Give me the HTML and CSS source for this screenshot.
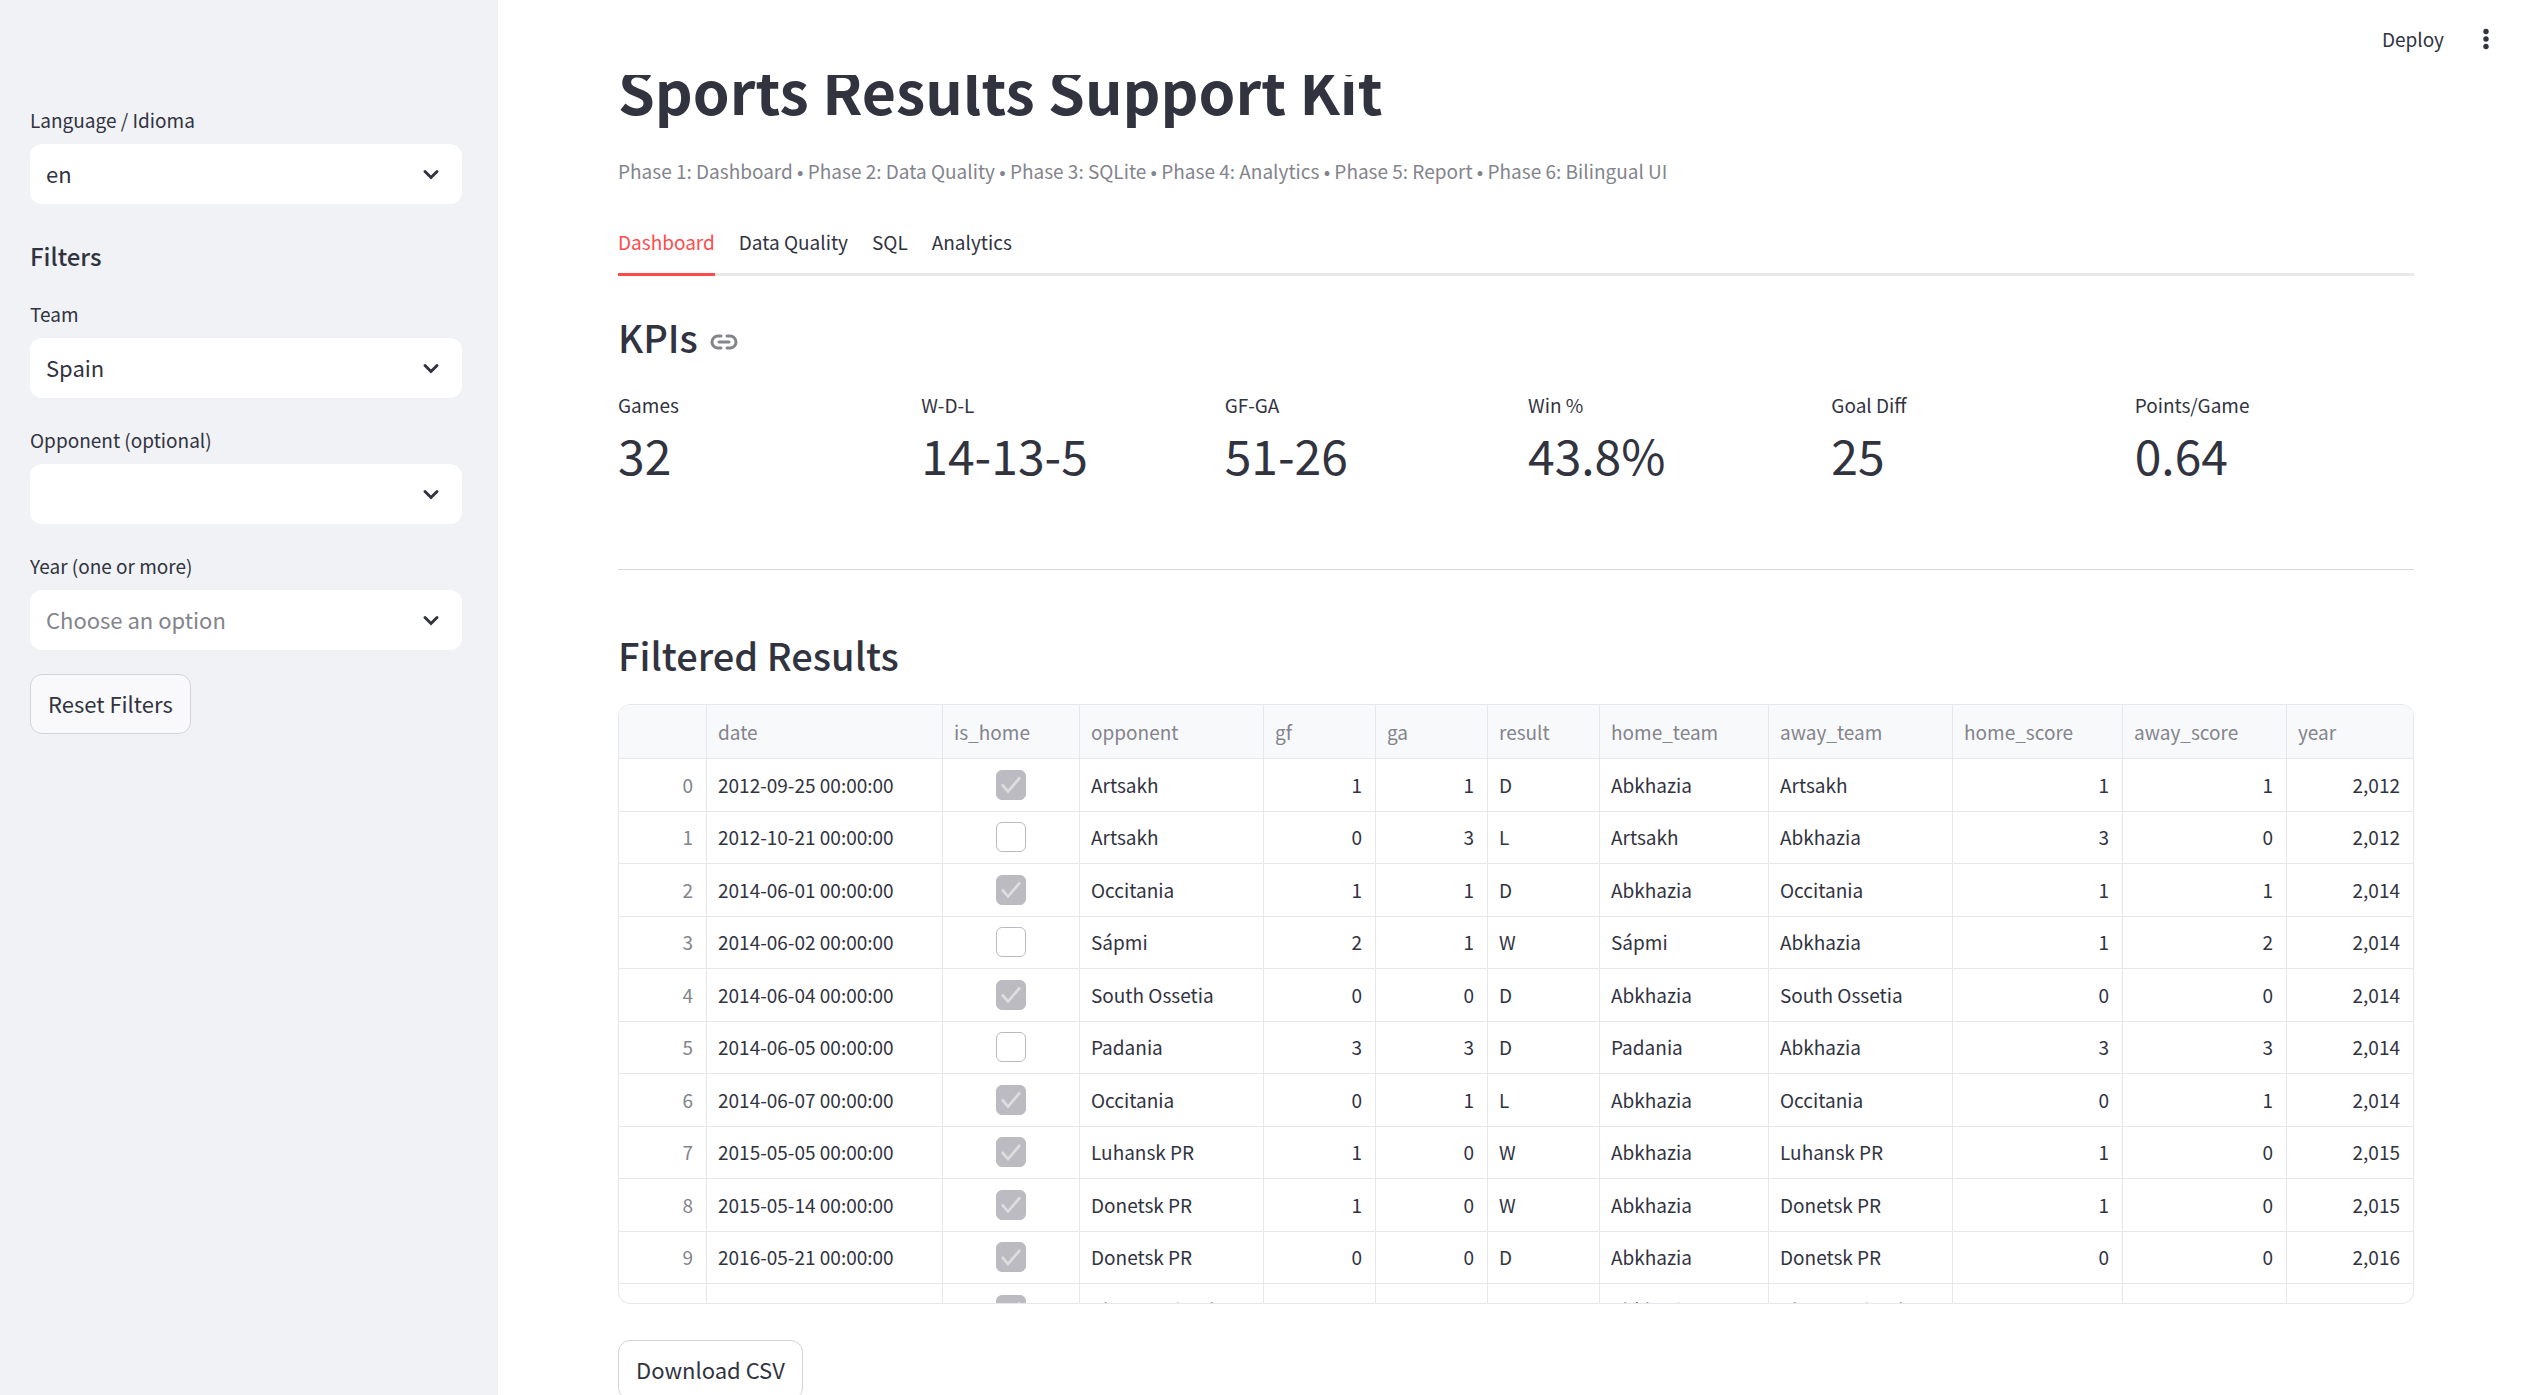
FILE: index.html
```html
<!DOCTYPE html>
<html lang="en">
<head>
<meta charset="utf-8">
<title>Sports Results Support Kit</title>
<link rel="stylesheet" href="styles.css">
</head>
<body>
<div class="app">
  <aside class="sidebar">
    <div class="field">
      <label for="lang">Language / Idioma</label>
      <div class="select">
        <select id="lang"><option>en</option><option>es</option></select>
        <svg class="chevron" viewBox="0 0 24 24" aria-hidden="true"><path d="M6 9.5l6 6 6-6"/></svg>
      </div>
    </div>
    <h3 class="sidebar-title">Filters</h3>
    <div class="field">
      <label for="team">Team</label>
      <div class="select">
        <select id="team"><option>Spain</option></select>
        <svg class="chevron" viewBox="0 0 24 24" aria-hidden="true"><path d="M6 9.5l6 6 6-6"/></svg>
      </div>
    </div>
    <div class="field">
      <label for="opponent">Opponent (optional)</label>
      <div class="select">
        <select id="opponent"><option></option></select>
        <svg class="chevron" viewBox="0 0 24 24" aria-hidden="true"><path d="M6 9.5l6 6 6-6"/></svg>
      </div>
    </div>
    <div class="field">
      <label for="year">Year (one or more)</label>
      <div class="select">
        <select id="year" class="placeholder"><option>Choose an option</option></select>
        <svg class="chevron" viewBox="0 0 24 24" aria-hidden="true"><path d="M6 9.5l6 6 6-6"/></svg>
      </div>
    </div>
    <button class="button" type="button">Reset Filters</button>
  </aside>

  <div class="main">
    <header class="toolbar">
      <button class="deploy" type="button">Deploy</button>
      <button class="menu" type="button" aria-label="Menu">
        <svg viewBox="0 0 24 24" aria-hidden="true"><circle cx="12" cy="4.5" r="2.7"/><circle cx="12" cy="12" r="2.7"/><circle cx="12" cy="19.5" r="2.7"/></svg>
      </button>
    </header>
    <main class="content">
      <h1>Sports Results Support Kit</h1>
      <p class="caption">Phase 1: Dashboard • Phase 2: Data Quality • Phase 3: SQLite • Phase 4: Analytics • Phase 5: Report • Phase 6: Bilingual UI</p>
      <div class="tabs" role="tablist">
        <button class="tab active" type="button" role="tab" aria-selected="true">Dashboard</button>
        <button class="tab" type="button" role="tab">Data Quality</button>
        <button class="tab" type="button" role="tab">SQL</button>
        <button class="tab" type="button" role="tab">Analytics</button>
      </div>

      <div class="heading">
        <h2 id="kpis">KPIs</h2>
        <a href="#kpis" class="anchor" aria-label="Link to heading"><svg viewBox="0 0 28 16" aria-hidden="true"><path d="M11 2H8a6 6 0 0 0 0 12h3M17 2h3a6 6 0 0 1 0 12h-3M9 8h10"/></svg></a>
      </div>
      <dl class="metrics">
        <div><dt>Games</dt><dd>32</dd></div>
        <div><dt>W-D-L</dt><dd>14-13-5</dd></div>
        <div><dt>GF-GA</dt><dd>51-26</dd></div>
        <div><dt>Win %</dt><dd>43.8%</dd></div>
        <div><dt>Goal Diff</dt><dd>25</dd></div>
        <div><dt>Points/Game</dt><dd>0.64</dd></div>
      </dl>
      <hr>
      <h2>Filtered Results</h2>
      <div class="table-frame">
        <table>
          <colgroup>
            <col class="c-index"><col class="c-date"><col class="c-flag"><col class="c-team"><col class="c-short"><col class="c-short"><col class="c-short"><col class="c-home"><col class="c-team"><col class="c-hscore"><col class="c-ascore"><col class="c-year">
          </colgroup>
          <thead>
            <tr><th></th><th>date</th><th>is_home</th><th>opponent</th><th>gf</th><th>ga</th><th>result</th><th>home_team</th><th>away_team</th><th>home_score</th><th>away_score</th><th>year</th></tr>
          </thead>
          <tbody>
            <tr><td class="idx">0</td><td>2012-09-25 00:00:00</td><td class="flag"><input type="checkbox" aria-label="is_home" checked disabled></td><td>Artsakh</td><td class="num">1</td><td class="num">1</td><td>D</td><td>Abkhazia</td><td>Artsakh</td><td class="num">1</td><td class="num">1</td><td class="num">2,012</td></tr>
            <tr><td class="idx">1</td><td>2012-10-21 00:00:00</td><td class="flag"><input type="checkbox" aria-label="is_home" disabled></td><td>Artsakh</td><td class="num">0</td><td class="num">3</td><td>L</td><td>Artsakh</td><td>Abkhazia</td><td class="num">3</td><td class="num">0</td><td class="num">2,012</td></tr>
            <tr><td class="idx">2</td><td>2014-06-01 00:00:00</td><td class="flag"><input type="checkbox" aria-label="is_home" checked disabled></td><td>Occitania</td><td class="num">1</td><td class="num">1</td><td>D</td><td>Abkhazia</td><td>Occitania</td><td class="num">1</td><td class="num">1</td><td class="num">2,014</td></tr>
            <tr><td class="idx">3</td><td>2014-06-02 00:00:00</td><td class="flag"><input type="checkbox" aria-label="is_home" disabled></td><td>Sápmi</td><td class="num">2</td><td class="num">1</td><td>W</td><td>Sápmi</td><td>Abkhazia</td><td class="num">1</td><td class="num">2</td><td class="num">2,014</td></tr>
            <tr><td class="idx">4</td><td>2014-06-04 00:00:00</td><td class="flag"><input type="checkbox" aria-label="is_home" checked disabled></td><td>South Ossetia</td><td class="num">0</td><td class="num">0</td><td>D</td><td>Abkhazia</td><td>South Ossetia</td><td class="num">0</td><td class="num">0</td><td class="num">2,014</td></tr>
            <tr><td class="idx">5</td><td>2014-06-05 00:00:00</td><td class="flag"><input type="checkbox" aria-label="is_home" disabled></td><td>Padania</td><td class="num">3</td><td class="num">3</td><td>D</td><td>Padania</td><td>Abkhazia</td><td class="num">3</td><td class="num">3</td><td class="num">2,014</td></tr>
            <tr><td class="idx">6</td><td>2014-06-07 00:00:00</td><td class="flag"><input type="checkbox" aria-label="is_home" checked disabled></td><td>Occitania</td><td class="num">0</td><td class="num">1</td><td>L</td><td>Abkhazia</td><td>Occitania</td><td class="num">0</td><td class="num">1</td><td class="num">2,014</td></tr>
            <tr><td class="idx">7</td><td>2015-05-05 00:00:00</td><td class="flag"><input type="checkbox" aria-label="is_home" checked disabled></td><td>Luhansk PR</td><td class="num">1</td><td class="num">0</td><td>W</td><td>Abkhazia</td><td>Luhansk PR</td><td class="num">1</td><td class="num">0</td><td class="num">2,015</td></tr>
            <tr><td class="idx">8</td><td>2015-05-14 00:00:00</td><td class="flag"><input type="checkbox" aria-label="is_home" checked disabled></td><td>Donetsk PR</td><td class="num">1</td><td class="num">0</td><td>W</td><td>Abkhazia</td><td>Donetsk PR</td><td class="num">1</td><td class="num">0</td><td class="num">2,015</td></tr>
            <tr><td class="idx">9</td><td>2016-05-21 00:00:00</td><td class="flag"><input type="checkbox" aria-label="is_home" checked disabled></td><td>Donetsk PR</td><td class="num">0</td><td class="num">0</td><td>D</td><td>Abkhazia</td><td>Donetsk PR</td><td class="num">0</td><td class="num">0</td><td class="num">2,016</td></tr>
            <tr><td class="idx">10</td><td>2016-05-29 00:00:00</td><td class="flag"><input type="checkbox" aria-label="is_home" checked disabled></td><td>Chagos Islands</td><td class="num">9</td><td class="num">0</td><td>W</td><td>Abkhazia</td><td>Chagos Islands</td><td class="num">9</td><td class="num">0</td><td class="num">2,016</td></tr>
          </tbody>
        </table>
      </div>
      <button class="button" type="button">Download CSV</button>
    </main>
  </div>
</div>
</body>
</html>
```
FILE: styles.css
```css
* { box-sizing: border-box; }

body {
  margin: 0;
  background: #fff;
  color: #31333f;
  font-family: "Noto Sans CJK JP", "Noto Sans", sans-serif;
  font-size: 19px;
  line-height: 30px;
}

h1, h2, h3, p, dl, dd { margin: 0; }

button, select { font: inherit; color: inherit; cursor: pointer; }

.app {
  display: flex;
  height: 100vh;
  overflow: hidden;
}

/* Sidebar */
.sidebar {
  flex: 0 0 498px;
  display: flex;
  flex-direction: column;
  align-items: flex-start;
  gap: 24px;
  padding: 102px 36px 24px 30px;
  background: #f0f2f6;
}

.sidebar-title {
  margin-top: 12px;
  font-size: 24px;
  font-weight: 500;
  line-height: 32px;
}

.field {
  display: flex;
  flex-direction: column;
  gap: 6px;
  width: 100%;
}

.field label { line-height: 36px; }

.select {
  display: grid;
  align-items: center;
}

.select > * { grid-area: 1 / 1; }

.select select {
  appearance: none;
  width: 100%;
  height: 60px;
  padding: 0 60px 2px 16px;
  border: 0;
  border-radius: 12px;
  background: #fff;
  font-size: 22px;
}

.select .placeholder { color: #83848c; }

.chevron {
  justify-self: end;
  width: 24px;
  height: 24px;
  margin-right: 19px;
  fill: none;
  stroke: #31333f;
  stroke-width: 3;
  stroke-linecap: round;
  pointer-events: none;
}

.button {
  height: 60px;
  padding: 0 17px 2px;
  border: 1px solid #d3d4d8;
  border-radius: 12px;
  background: #fff;
  font-size: 22px;
}

.sidebar .button { background: #f9f9fb; }

/* Main area */
.main {
  flex: 1;
  min-width: 0;
  overflow: hidden;
}

.toolbar {
  position: relative;
  z-index: 1;
  display: flex;
  justify-content: flex-end;
  align-items: center;
  gap: 30px;
  height: 75px;
  padding: 2px 32px 0 0;
  background: #fff;
}

.toolbar button {
  padding: 0;
  border: 0;
  background: none;
}

.toolbar svg {
  display: block;
  width: 24px;
  height: 24px;
  fill: #31333f;
}

.content { padding: 0 116px 0 120px; }

h1 {
  margin-top: -15px;
  font-size: 59px;
  font-weight: 700;
  line-height: 60px;
}

h2 {
  font-size: 38px;
  font-weight: 500;
  line-height: 50px;
}

.caption {
  margin-top: 36px;
  color: #83848c;
}

.tabs {
  display: flex;
  gap: 24px;
  margin-top: 41px;
  box-shadow: inset 0 -3px #e9e9eb;
}

.tab {
  padding: 0 0 16px;
  border: 0;
  border-bottom: 3px solid transparent;
  background: none;
}

.tab.active {
  border-color: #ff4b4b;
  color: #ff4b4b;
}

.heading {
  display: flex;
  align-items: center;
  gap: 12px;
  margin-top: 36px;
}

.anchor svg {
  display: block;
  width: 28px;
  height: 16px;
  margin-top: 10px;
  fill: none;
  stroke: #83848c;
  stroke-width: 3;
  stroke-linecap: round;
}

.metrics {
  display: grid;
  grid-template-columns: repeat(6, 1fr);
  gap: 24px;
  margin-top: 28px;
}

.metrics dd {
  margin-top: 4px;
  font-size: 48px;
  line-height: 60px;
}

hr {
  height: 1px;
  margin: 85px 0 60px;
  border: 0;
  background: #d6d6d9;
}

/* Data table */
.table-frame {
  height: 600px;
  margin: 24px 0 36px;
  border: 1px solid #e6e7ea;
  border-radius: 12px;
  overflow: hidden;
}

table {
  width: 100%;
  table-layout: fixed;
  border-collapse: separate;
  border-spacing: 0;
  font-size: 19px;
}

.c-index { width: 88px; }
.c-date { width: 236px; }
.c-flag { width: 137px; }
.c-team { width: 184px; }
.c-short { width: 112px; }
.c-home { width: 169px; }
.c-hscore { width: 170px; }
.c-ascore { width: 164px; }
.c-year { width: 126px; }

th, td {
  padding: 0 11px;
  border-right: 1px solid #e6e7ea;
  border-bottom: 1px solid #e6e7ea;
  text-align: left;
  white-space: nowrap;
}

th:last-child, td:last-child { border-right: 0; }

th {
  height: 54px;
  background: #f8f9fb;
  color: #83848c;
  font-weight: 400;
}

td {
  height: 52px;
  padding-bottom: 1px;
}

tr:nth-child(odd) td { height: 53px; }

td.num { padding-right: 13px; text-align: right; }
td.idx { padding-right: 13px; color: #83848c; text-align: right; }
td.flag { text-align: center; }

input[type="checkbox"] {
  appearance: none;
  display: block;
  width: 30px;
  height: 30px;
  margin: 0 auto;
  border: 1px solid #bbbac0;
  border-radius: 6px;
}

input[type="checkbox"]:checked { background: #bcbbc1; }

input[type="checkbox"]:checked::before {
  content: "";
  display: block;
  height: 28px;
  background: #dededf;
  clip-path: polygon(4px 15px, 6px 13px, 11px 19px, 22px 6px, 24px 8px, 11px 23px);
}
```
